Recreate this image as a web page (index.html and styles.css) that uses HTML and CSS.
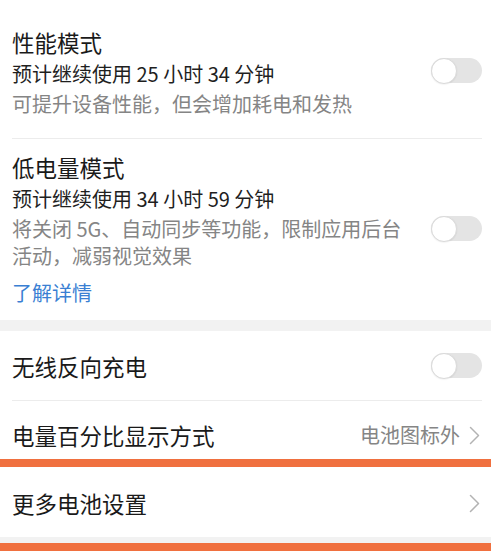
FILE: index.html
```html
<!DOCTYPE html>
<html lang="zh-CN">
<head>
<meta charset="utf-8">
<title>电池</title>
<link rel="stylesheet" href="styles.css">
</head>
<body>
<div class="page">
  <div class="card">
    <div class="item item-first">
      <div class="text">
        <div class="title">性能模式</div>
        <div class="sub">预计继续使用 25 小时 34 分钟</div>
        <div class="desc">可提升设备性能，但会增加耗电和发热</div>
      </div>
      <span class="switch"><span class="knob"></span></span>
    </div>
    <div class="divider"></div>
    <div class="item item-second">
      <div class="text">
        <div class="title">低电量模式</div>
        <div class="sub">预计继续使用 34 小时 59 分钟</div>
        <div class="desc">将关闭 5G、自动同步等功能，限制应用后台活动，减弱视觉效果</div>
        <div class="link">了解详情</div>
      </div>
      <span class="switch"><span class="knob"></span></span>
    </div>
  </div>
  <div class="band"></div>
  <div class="card">
    <div class="row row-tall">
      <span class="row-title">无线反向充电</span>
      <span class="switch"><span class="knob"></span></span>
    </div>
    <div class="divider"></div>
    <div class="row">
      <span class="row-title">电量百分比显示方式</span>
      <span class="value">电池图标外</span>
      <svg class="chevron" width="11" height="19" viewBox="0 0 11 19"><path d="M1.5 1.5 L9.5 9.5 L1.5 17.5" fill="none" stroke="#b3b3b3" stroke-width="1.5" stroke-linecap="round" stroke-linejoin="round"/></svg>
    </div>
    <div class="row">
      <span class="row-title">更多电池设置</span>
      <svg class="chevron" width="11" height="19" viewBox="0 0 11 19"><path d="M1.5 1.5 L9.5 9.5 L1.5 17.5" fill="none" stroke="#b3b3b3" stroke-width="1.5" stroke-linecap="round" stroke-linejoin="round"/></svg>
    </div>
  </div>
  <div class="band band-bottom"></div>
  <div class="highlight"></div>
</div>
</body>
</html>
```

FILE: styles.css
```css
html, body {
  margin: 0;
  padding: 0;
  background: #ffffff;
}

.page {
  position: relative;
  width: 491px;
  height: 557px;
  overflow: hidden;
  font-family: "Noto Sans CJK SC", "Noto Sans", sans-serif;
  color: #1c1c1c;
}

.card {
  background: #ffffff;
}

.item {
  display: flex;
  align-items: center;
  padding-left: 12px;
  padding-right: 9px;
}

.item-first {
  padding-top: 27px;
  padding-bottom: 21px;
}

.item-second {
  padding-top: 13px;
  padding-bottom: 12px;
}

.text {
  flex: 1;
  min-width: 0;
}

.title {
  font-size: 22.5px;
  line-height: 30px;
  color: #1a1a1a;
}

.sub {
  margin-top: 2px;
  font-size: 20px;
  line-height: 30px;
  color: #1f1f1f;
}

.desc {
  margin-top: 1px;
  font-size: 20px;
  line-height: 27px;
  color: #858585;
}

.link {
  margin-top: 9px;
  font-size: 20px;
  line-height: 30px;
  color: #3a7fd3;
}

.switch {
  flex: none;
  position: relative;
  width: 51px;
  height: 25px;
  margin-left: 20px;
  margin-bottom: 3px;
  border-radius: 13px;
  background: #e4e4e4;
}

.knob {
  position: absolute;
  left: 0;
  top: -0.5px;
  width: 26px;
  height: 26px;
  box-sizing: border-box;
  border-radius: 50%;
  background: #ffffff;
  border: 1px solid #dadada;
  box-shadow: 0 0.5px 1.5px rgba(0, 0, 0, 0.08);
}

.divider {
  height: 1px;
  margin-left: 12px;
  margin-right: 9px;
  background: #ececec;
}

.band {
  height: 11px;
  background: #f2f2f2;
}

.band-bottom {
  height: 6px;
}

.row {
  display: flex;
  align-items: center;
  height: 68px;
  padding-left: 12px;
  padding-right: 9px;
}

.row-tall {
  height: 69px;
}

.row .switch {
  margin-bottom: 0;
  margin-left: auto;
}

.row-title {
  font-size: 22.5px;
  line-height: 30px;
  color: #1a1a1a;
}

.value {
  margin-left: auto;
  font-size: 20px;
  line-height: 30px;
  color: #858585;
}

.chevron {
  flex: none;
  margin-left: 9px;
  margin-right: 2px;
}

.row-title + .chevron {
  margin-left: auto;
}

.highlight {
  position: absolute;
  left: 0;
  right: 0;
  top: 459px;
  height: 92px;
  box-sizing: border-box;
  border-top: 8px solid #f0703f;
  border-bottom: 8px solid #f0703f;
  pointer-events: none;
}
```
